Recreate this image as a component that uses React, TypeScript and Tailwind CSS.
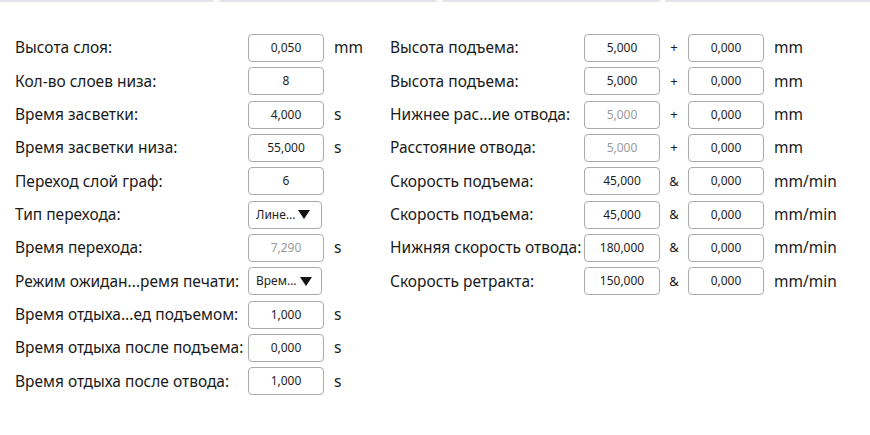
import React from "react";

type LRow = { label: string; value: string; unit?: string; disabled?: boolean; select?: boolean };
type RRow = { label: string; v1: string; sign: string; v2: string; unit: string; disabled?: boolean };

const left: LRow[] = [
  { label: "Высота слоя:", value: "0,050", unit: "mm" },
  { label: "Кол-во слоев низа:", value: "8" },
  { label: "Время засветки:", value: "4,000", unit: "s" },
  { label: "Время засветки низа:", value: "55,000", unit: "s" },
  { label: "Переход слой граф:", value: "6" },
  { label: "Тип перехода:", value: "Лине...", select: true },
  { label: "Время перехода:", value: "7,290", unit: "s", disabled: true },
  { label: "Режим ожидан...ремя печати:", value: "Врем...", select: true },
  { label: "Время отдыха...ед подъемом:", value: "1,000", unit: "s" },
  { label: "Время отдыха после подъема:", value: "0,000", unit: "s" },
  { label: "Время отдыха после отвода:", value: "1,000", unit: "s" },
];

const right: RRow[] = [
  { label: "Высота подъема:", v1: "5,000", sign: "+", v2: "0,000", unit: "mm" },
  { label: "Высота подъема:", v1: "5,000", sign: "+", v2: "0,000", unit: "mm" },
  { label: "Нижнее рас...ие отвода:", v1: "5,000", sign: "+", v2: "0,000", unit: "mm", disabled: true },
  { label: "Расстояние отвода:", v1: "5,000", sign: "+", v2: "0,000", unit: "mm", disabled: true },
  { label: "Скорость подъема:", v1: "45,000", sign: "&", v2: "0,000", unit: "mm/min" },
  { label: "Скорость подъема:", v1: "45,000", sign: "&", v2: "0,000", unit: "mm/min" },
  { label: "Нижняя скорость отвода:", v1: "180,000", sign: "&", v2: "0,000", unit: "mm/min" },
  { label: "Скорость ретракта:", v1: "150,000", sign: "&", v2: "0,000", unit: "mm/min" },
];

function Box({ value, disabled }: { value: string; disabled?: boolean }) {
  return (
    <div
      className={`h-[28px] w-[76px] shrink-0 rounded-[4px] border border-[#ababab] bg-white flex items-center justify-center text-[12px] ${
        disabled ? "text-[#9a9a9a]" : "text-[#1e1e1e]"
      }`}
    >
      {value}
    </div>
  );
}

function Select({ value }: { value: string }) {
  return (
    <div className="h-[28px] w-[74px] shrink-0 rounded-[4px] border border-[#ababab] bg-white flex items-center pl-[7px] gap-[3px] text-[12px] text-[#1e1e1e]">
      <span>{value}</span>
      <svg width="12" height="9" viewBox="0 0 12 9">
        <polygon points="0,0 12,0 6,9" fill="#111" />
      </svg>
    </div>
  );
}

export default function App() {
  return (
    <div
      className="w-[870px] h-[435px] bg-white relative overflow-hidden text-[#1a1a1a]"
      style={{ fontFamily: '"Noto Sans", "Open Sans", sans-serif' }}
    >
      <div className="flex gap-[5px] h-[2px]">
        <div className="w-[214px] bg-[#e3e3ec] rounded-r-full" />
        <div className="w-[218px] bg-[#e3e3ec] rounded-full" />
        <div className="w-[218px] bg-[#e3e3ec] rounded-full" />
        <div className="flex-1 bg-[#e3e3ec] rounded-l-full" />
      </div>
      <div className="flex pl-[15px] pt-[32px]">
        <div className="w-[375px] shrink-0 flex flex-col gap-y-[5.33px]">
          {left.map((r, i) => (
            <div key={i} className="flex items-center h-[28px]">
              <div className="w-[233px] shrink-0 text-[15.5px] whitespace-nowrap">{r.label}</div>
              {r.select ? <Select value={r.value} /> : <Box value={r.value} disabled={r.disabled} />}
              {r.unit && <div className="ml-[10px] text-[15.5px]">{r.unit}</div>}
            </div>
          ))}
        </div>
        <div className="flex flex-col gap-y-[5.33px]">
          {right.map((r, i) => (
            <div key={i} className="flex items-center h-[28px]">
              <div className="w-[194px] shrink-0 text-[15.5px] whitespace-nowrap">{r.label}</div>
              <Box value={r.v1} disabled={r.disabled} />
              <div className="w-[28px] text-center text-[13px]">{r.sign}</div>
              <Box value={r.v2} />
              <div className="ml-[10px] text-[15.5px]">{r.unit}</div>
            </div>
          ))}
        </div>
      </div>
    </div>
  );
}
